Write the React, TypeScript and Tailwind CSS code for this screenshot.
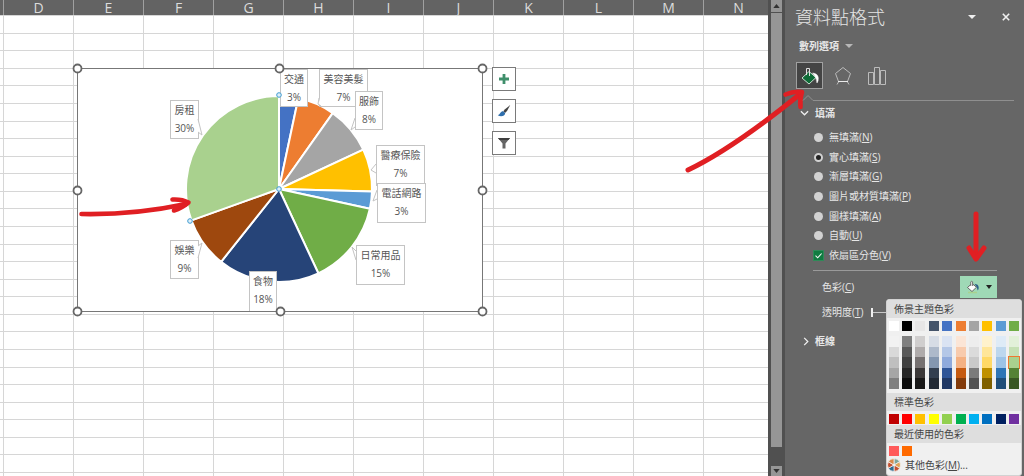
import { useState } from "react";
import type { ReactNode } from "react";

const COLUMNS = "DEFGHIJKLMN".split("");
const ROWS = Array.from({ length: 27 }, (_, i) => i + 1);

const CENTER = { x: 279, y: 189 };
const RADIUS = 93;

const SLICES = [
  { color: "#4472c4", from: 0, to: 12 },
  { color: "#ed7d31", from: 12, to: 35.3 },
  { color: "#a5a5a5", from: 35.3, to: 65 },
  { color: "#ffc000", from: 65, to: 91.6 },
  { color: "#5b9bd5", from: 91.6, to: 102.3 },
  { color: "#70ad47", from: 102.3, to: 155 },
  { color: "#264478", from: 155, to: 218.5 },
  { color: "#9e480e", from: 218.5, to: 250.3 },
  { color: "#a9d18e", from: 250.3, to: 360 },
];

const LABELS = [
  { name: "房租", value: "30%", x: 170, y: 100, w: 28, h: 38, tail: "M198 119 L202 135 L198 132" },
  { name: "交通", value: "3%", x: 280, y: 69, w: 27, h: 37, tail: "" },
  { name: "美容美髮", value: "7%", x: 319, y: 69, w: 48, h: 37, tail: "M319 98 L318 104 L321 106" },
  { name: "服飾", value: "8%", x: 355, y: 91, w: 27, h: 38, tail: "M355 118 L351 130 L355 127" },
  { name: "醫療保險", value: "7%", x: 376, y: 145, w: 48, h: 40, tail: "M376 164 L371 170 L376 173" },
  { name: "電話網路", value: "3%", x: 377, y: 183, w: 48, h: 39, tail: "M377 190 L373 201 L377 199" },
  { name: "日常用品", value: "15%", x: 356, y: 245, w: 48, h: 39, tail: "M356 260 L352 247 L356 251" },
  { name: "食物", value: "18%", x: 249, y: 271, w: 27, h: 40, tail: "" },
  { name: "娛樂", value: "9%", x: 170, y: 240, w: 28, h: 38, tail: "M198 246 L202 243 L198 258" },
];

const HANDLES = [
  [77, 68], [279, 68], [482, 68],
  [77, 190], [482, 190],
  [77, 311], [280, 311], [482, 311],
];

const POINT_HANDLES = [[279, 95], [279, 189], [190, 221]];

const FILL_OPTIONS = [
  { label: "無填滿", hotkey: "N" },
  { label: "實心填滿", hotkey: "S" },
  { label: "漸層填滿", hotkey: "G" },
  { label: "圖片或材質填滿", hotkey: "P" },
  { label: "圖樣填滿", hotkey: "A" },
  { label: "自動", hotkey: "U" },
];

const THEME = ["#ffffff", "#000000", "#e7e6e6", "#44546a", "#4472c4", "#ed7d31", "#a5a5a5", "#ffc000", "#5b9bd5", "#70ad47"];

const SHADES = [
  ["#f2f2f2", "#7f7f7f", "#d0cece", "#d6dce5", "#dae3f3", "#fbe5d6", "#ededed", "#fff2cc", "#deebf7", "#e2f0d9"],
  ["#d9d9d9", "#595959", "#afabab", "#adb9ca", "#b4c7e7", "#f8cbad", "#dbdbdb", "#ffe699", "#bdd7ee", "#c5e0b4"],
  ["#bfbfbf", "#404040", "#767171", "#8497b0", "#8faadc", "#f4b183", "#c9c9c9", "#ffd966", "#9dc3e6", "#a9d18e"],
  ["#a6a6a6", "#262626", "#3b3838", "#333f50", "#2f5597", "#c55a11", "#7b7b7b", "#bf9000", "#2e75b6", "#548235"],
  ["#7f7f7f", "#0d0d0d", "#181717", "#222a35", "#203864", "#843c0c", "#525252", "#7f6000", "#1f4e79", "#385723"],
];

const STANDARD = ["#c00000", "#ff0000", "#ffc000", "#ffff00", "#92d050", "#00b050", "#00b0f0", "#0070c0", "#002060", "#7030a0"];
const RECENT = ["#ff5a5a", "#ff6a00"];

function polar(angle: number) {
  const r = (angle * Math.PI) / 180;
  return `${CENTER.x + RADIUS * Math.sin(r)} ${CENTER.y - RADIUS * Math.cos(r)}`;
}

function slicePath(from: number, to: number) {
  const large = to - from > 180 ? 1 : 0;
  return `M${CENTER.x} ${CENTER.y} L${polar(from)} A${RADIUS} ${RADIUS} 0 ${large} 1 ${polar(to)} Z`;
}

function Hotkey({ children }: { children: ReactNode }) {
  return (
    <span>
      (<span className="underline underline-offset-1">{children}</span>)
    </span>
  );
}

function Chart() {
  return (
    <svg
      viewBox="70 60 420 260"
      className="absolute left-[70px] top-[60px] h-[260px] w-[420px]"
      role="img"
      aria-label="圓形圖"
    >
      <rect x="77.5" y="68.5" width="405" height="243" fill="#fff" stroke="#777" />
      {SLICES.map((s) => (
        <path key={s.from} d={slicePath(s.from, s.to)} fill={s.color} stroke="#fff" strokeWidth="2" strokeLinejoin="round" />
      ))}
      {LABELS.map((l) => (
        <g key={l.name}>
          <rect x={l.x + 0.5} y={l.y + 0.5} width={l.w} height={l.h} fill="#fff" stroke="#c4c4c4" />
          <path d={l.tail} fill="#fff" stroke="#c4c4c4" />
          <text
            x={l.x + l.w / 2 + 0.5}
            y={l.y + 14}
            textAnchor="middle"
            fill="#555"
            className="font-['Open_Sans','Noto_Sans_CJK_TC',sans-serif] text-[10px]"
          >
            {l.name}
          </text>
          <text
            x={l.x + l.w / 2 + 0.5}
            y={l.y + 32}
            textAnchor="middle"
            fill="#555"
            className="font-['Open_Sans','Noto_Sans_CJK_TC',sans-serif] text-[10px]"
          >
            {l.value}
          </text>
        </g>
      ))}
      <path d="M77 311.5H483" stroke="#777" />
      {HANDLES.map(([x, y]) => (
        <circle key={`${x}-${y}`} cx={x + 0.5} cy={y + 0.5} r="4" fill="#fff" stroke="#666" strokeWidth="1.8" />
      ))}
      {POINT_HANDLES.map(([x, y]) => (
        <circle key={`${x}-${y}`} cx={x} cy={y} r="2.3" fill="#dff0fa" stroke="#3f9bd0" strokeWidth="1" />
      ))}
    </svg>
  );
}

function ChartButton({ label, children }: { label: string; children: ReactNode }) {
  return (
    <button aria-label={label} className="flex size-6 items-center justify-center border border-[#7a7a7a] bg-white">
      <svg viewBox="0 0 14 14" className="size-3.5" aria-hidden="true">
        {children}
      </svg>
    </button>
  );
}

function Sheet() {
  return (
    <main className="relative min-w-0 flex-1 overflow-hidden bg-white">
      <table className="w-full min-w-[773px] table-fixed border-separate border-spacing-0">
        <colgroup>
          <col className="w-[3px]" />
          {COLUMNS.map((c) => (
            <col key={c} className="w-[70px]" />
          ))}
          <col />
        </colgroup>
        <thead>
          <tr className="h-[15px] bg-[#636363]">
            <td className="p-0" />
            {COLUMNS.map((c) => (
              <th
                key={c}
                scope="col"
                className="border-l border-[#a0a0a0] p-0 text-sm font-normal leading-[15px] text-[#dcdcdc]"
              >
                {c}
              </th>
            ))}
            <td className="p-0" />
          </tr>
        </thead>
        <tbody>
          {ROWS.map((r) => (
            <tr key={r} className="h-[18px] nth-[7n+2]:h-[17px] nth-[7n+4]:h-[17px] nth-[7n+7]:h-[17px]">
              <td className="border-t border-[#d6d6d6] p-0" />
              {COLUMNS.map((c) => (
                <td key={c} className="border-l border-t border-[#d6d6d6] p-0" />
              ))}
              <td className="border-t border-[#d6d6d6] p-0" />
            </tr>
          ))}
        </tbody>
      </table>
      <Chart />
      <div className="absolute left-[492px] top-[67px] flex flex-col gap-2">
        <ChartButton label="圖表項目">
          <path d="M7 2v10M2 7h10" stroke="#3f8f6b" strokeWidth="2.8" />
        </ChartButton>
        <ChartButton label="圖表樣式">
          <path d="M13.2 1 8 5.200 6.300 7.300 8 9l2-2Z" fill="#444" />
          <path d="M6.200 7.200C3.500 7 3.500 10 .8 11.300 4 13 8 12 8.200 9.200Z" fill="#2f6fad" />
        </ChartButton>
        <ChartButton label="圖表篩選">
          <path d="M1 2h12L8.500 7.500V12.500h-3V7.500Z" fill="#666" />
          <path d="M1 2h12L11.500 4h-9Z" fill="#3f3f3f" />
        </ChartButton>
      </div>
      <svg viewBox="70 190 130 40" className="pointer-events-none absolute left-[70px] top-[190px] h-[40px] w-[130px]" aria-hidden="true">
        <g fill="none" stroke="#e01f23" strokeWidth="4.6" strokeLinecap="round" strokeLinejoin="round">
          <path d="M81.500 214Q135 215 186 204" />
          <path d="M172.500 199.500Q182 199 188.500 202.500 182 208 174 210.500" />
          <path d="M175 207.500 186 204" />
        </g>
      </svg>
    </main>
  );
}

function ScrollBar() {
  return (
    <div className="flex w-[17px] shrink-0 flex-col border-x-[3px] border-[#505050] bg-[#505050]">
      <button aria-label="向上捲動" className="flex h-3 items-center justify-center bg-[#969696]">
        <svg viewBox="0 0 8 5" className="h-[4px] w-[7px]" aria-hidden="true">
          <path d="M0 5 4 0l4 5Z" fill="#333" />
        </svg>
      </button>
      <div className="mb-[19px] mt-px flex-1 bg-[#969696]" />
      <button aria-label="向下捲動" className="flex h-[10px] items-center justify-center bg-[#969696]">
        <svg viewBox="0 0 8 5" className="h-[4px] w-[7px]" aria-hidden="true">
          <path d="M0 0h8L4 5Z" fill="#333" />
        </svg>
      </button>
    </div>
  );
}

function Swatch({ color, selected = false }: { color: string; selected?: boolean }) {
  return (
    <button
      aria-label={color}
      style={{ backgroundColor: color }}
      className={selected ? "h-full w-[10px] outline outline-1 outline-[#f07830]" : "h-full w-[10px]"}
    />
  );
}

function SwatchRow({ colors }: { colors: string[] }) {
  return (
    <div className="grid h-[10px] grid-cols-10 justify-items-center">
      {colors.map((c) => (
        <Swatch key={c} color={c} />
      ))}
    </div>
  );
}

function ColorMenu() {
  const heading = "bg-[#dedede] pl-[7px] text-[10px] leading-[18px] text-[#444]";
  return (
    <div className="absolute -right-[25px] top-full z-10 mt-px w-[136px] overflow-hidden rounded-[3px] border border-[#d2d2d2] bg-[#f0f0f0] pb-px">
      <h3 className={heading}>佈景主題色彩</h3>
      <div className="pt-[3px]">
        <SwatchRow colors={THEME} />
      </div>
      <div className="mb-1 mt-[5px] grid h-[53px] grid-cols-10 justify-items-center">
        {SHADES.map((row, i) =>
          row.map((c, j) => <Swatch key={`${i}-${j}`} color={c} selected={i === 2 && j === 9} />),
        )}
      </div>
      <h3 className={heading}>標準色彩</h3>
      <div className="pb-px pt-[3px]">
        <SwatchRow colors={STANDARD} />
      </div>
      <h3 className={heading}>最近使用的色彩</h3>
      <div className="pt-[3px]">
        <SwatchRow colors={RECENT} />
      </div>
      <button className="flex h-[18px] w-full items-center gap-1 text-[10px] leading-[18px] text-[#444]">
        <svg viewBox="-7 -7 14 14" className="size-[14px]" aria-hidden="true">
          <g stroke="#f0f0f0" strokeWidth=".8">
            <path d="M0 0V-6.500A6.500 6.500 0 0 1 5.600-3.200Z" fill="#7fa69a" />
            <path d="M0 0 5.600-3.200A6.500 6.500 0 0 1 5.600 3.200Z" fill="#e0a458" />
            <path d="M0 0 5.600 3.200A6.500 6.500 0 0 1 0 6.500Z" fill="#c4502f" />
            <path d="M0 0V6.500A6.500 6.500 0 0 1-5.600 3.200Z" fill="#2f6b8f" />
            <path d="M0 0-5.600 3.200A6.500 6.500 0 0 1-5.600-3.200Z" fill="#c4502f" />
            <path d="M0 0-5.600-3.200A6.500 6.500 0 0 1 0-6.500Z" fill="#d98a4a" />
          </g>
          <circle r="1.3" fill="#f0f0f0" />
        </svg>
        <span>
          其他色彩<Hotkey>M</Hotkey>...
        </span>
      </button>
    </div>
  );
}

function FormatPane() {
  const [fill, setFill] = useState("S");
  return (
    <aside className="relative w-[239px] shrink-0 bg-[#666666] text-[10px] text-[#e6e6e6]">
      <header className="flex h-[34px] items-center pl-[10px] pr-[14px]">
        <h1 className="flex-1 text-lg font-light leading-[34px] text-[#e4e4e4]">資料點格式</h1>
        <button aria-label="工作窗格選項" className="mr-[26px]">
          <svg viewBox="0 0 8 4" className="h-[4px] w-[8px]" aria-hidden="true">
            <path d="M0 0h8L4 4Z" fill="#f0f0f0" />
          </svg>
        </button>
        <button aria-label="關閉">
          <svg viewBox="0 0 8 8" className="size-2" aria-hidden="true">
            <path d="M.8.8l6.400 6.400M7.200.8.8 7.200" stroke="#f0f0f0" strokeWidth="1.6" />
          </svg>
        </button>
      </header>

      <button className="mt-1 flex h-4 items-center gap-[6px] pl-[14px] font-bold">
        數列選項
        <svg viewBox="0 0 8 4" className="h-[4px] w-[8px]" aria-hidden="true">
          <path d="M0 0h8L4 4Z" fill="#b8b8b8" />
        </svg>
      </button>

      <div className="mt-2 flex h-[27px] items-center gap-[11px] pl-[11px]">
        <button aria-label="填滿與線條" className="flex size-[27px] items-center justify-center border border-[#a0a0a0] bg-[#444444]">
          <svg viewBox="0 0 20 20" className="size-5" aria-hidden="true">
            <path d="M2 12 9 5.500l7 6L9 18Z" fill="#0f6b37" stroke="#c8dccf" strokeWidth="1" />
            <path d="M6.500 9V2.500h3V10" fill="none" stroke="#e0e0e0" />
            <path d="M12.500 7q5.500.5 5.800 5 .2 3-1.300 5Q16.800 11.500 12.500 7Z" fill="#ffffff" stroke="#ffffff" strokeWidth=".5" />
          </svg>
        </button>
        <button aria-label="效果" className="flex w-[18px] justify-center">
          <svg viewBox="0 0 18 20" className="h-5 w-[18px]" aria-hidden="true">
            <path d="M9 1.500 16.500 7.500 13.500 15.500H4.500L1.500 7.500Z" fill="none" stroke="#bcbcbc" />
            <path d="M4.500 16 3 18.500M13.500 16l1.500 2.500" stroke="#bcbcbc" />
            <path d="M4 15.500h10" stroke="#eaeaea" />
          </svg>
        </button>
        <button aria-label="數列選項" className="ml-[5px]">
          <svg viewBox="0 0 18 20" className="h-5 w-[18px]" aria-hidden="true">
            <path d="M.5 6.500h5v12h-5ZM6.500 1.500h5v17h-5ZM12.500 4.500h5v14h-5Z" fill="none" stroke="#bcbcbc" />
          </svg>
        </button>
      </div>

      <div className="ml-[15px] mr-[10px] mt-[6px] flex items-end">
        <svg viewBox="0 0 20 6" className="h-[6px] w-5" aria-hidden="true">
          <path d="M0 5.500h3L8 .5 13 5.500h7" fill="none" stroke="#8f8f8f" />
        </svg>
        <div className="h-px flex-1 bg-[#8f8f8f]" />
      </div>

      <section className="pt-[2px]">
        <button className="flex h-5 items-center gap-[6px] pl-[15px] font-bold">
          <svg viewBox="0 0 10 6" className="h-[6px] w-[9px]" aria-hidden="true">
            <path d="m1 1 4 4 4-4" fill="none" stroke="#f0f0f0" strokeWidth="1.4" />
          </svg>
          填滿
        </button>

        <div className="mt-[5px] grid h-[137px] grid-rows-7 pl-[29px]">
          {FILL_OPTIONS.map((o) => (
            <label key={o.hotkey} className="flex items-center gap-[6px]">
              <input
                type="radio"
                name="fill"
                checked={fill === o.hotkey}
                onChange={() => setFill(o.hotkey)}
                className="size-[9px] appearance-none rounded-full bg-[#d2d2d2] checked:border-2 checked:border-[#d2d2d2] checked:bg-[#222222]"
              />
              <span>
                {o.label}
                <Hotkey>{o.hotkey}</Hotkey>
              </span>
            </label>
          ))}
          <label className="flex items-center gap-[6px]">
            <span className="relative flex size-[9px]">
              <input type="checkbox" defaultChecked className="size-[9px] appearance-none bg-[#107c41] outline outline-1 outline-[#2f8a58]" />
              <svg viewBox="0 0 9 9" className="pointer-events-none absolute inset-0" aria-hidden="true">
                <path d="m1.500 4.600 2.200 2.200L7.600 2.500" fill="none" stroke="#f4f4f4" strokeWidth="1.1" />
              </svg>
            </span>
            <span>
              依扇區分色<Hotkey>V</Hotkey>
            </span>
          </label>
        </div>

        <div className="ml-7 mr-[27px] mt-[5px] h-px bg-[#9a9a9a]" />

        <div className="mr-[27px] mt-[5px] flex h-[22px] items-center justify-between pl-[37px]">
          <span>
            色彩<Hotkey>C</Hotkey>
          </span>
          <div className="relative">
            <button aria-label="色彩" className="flex h-[22px] w-[37px] items-center justify-center gap-[6px] bg-[#9fd9b6]">
              <svg viewBox="0 0 14 14" className="size-[14px]" aria-hidden="true">
                <path d="M2 12.500h9" stroke="#a9d18e" strokeWidth="1.5" />
                <path d="M1.500 7.500 6 3.500l4.500 3.700L6 11.500Z" fill="#fff" stroke="#555" strokeWidth=".9" />
                <path d="M4.800 6V1.800q.9-1 1.800 0V6" fill="#fff" stroke="#555" strokeWidth=".8" />
                <path d="M8.500 3.800q4 .4 4.200 3.600.1 2-1 3.200Q11.200 6.800 8.500 3.800Z" fill="#2c5f8a" />
              </svg>
              <svg viewBox="0 0 6 4" className="h-[4px] w-[6px]" aria-hidden="true">
                <path d="M0 0h6L3 4Z" fill="#222" />
              </svg>
            </button>
            <ColorMenu />
          </div>
        </div>

        <label className="mr-[27px] mt-1 flex h-5 items-center gap-2 pl-[37px]">
          <span>
            透明度<Hotkey>T</Hotkey>
          </span>
          <input
            type="range"
            defaultValue={0}
            className="h-px min-w-0 flex-1 appearance-none bg-[#c8c8c8] [&::-webkit-slider-thumb]:h-[9px] [&::-webkit-slider-thumb]:w-[2px] [&::-webkit-slider-thumb]:appearance-none [&::-webkit-slider-thumb]:bg-[#f0f0f0]"
          />
        </label>
      </section>

      <button className="mt-[9px] flex h-5 items-center gap-[6px] pl-[18px] font-bold">
        <svg viewBox="0 0 6 10" className="h-[9px] w-[6px]" aria-hidden="true">
          <path d="m1 1 4 4-4 4" fill="none" stroke="#f0f0f0" strokeWidth="1.4" />
        </svg>
        框線
      </button>

      <svg
        viewBox="680 0 344 270"
        className="pointer-events-none absolute right-0 top-0 z-20 h-[270px] w-[344px]"
        aria-hidden="true"
      >
        <g fill="none" stroke="#e01f23" strokeWidth="5" strokeLinecap="round" strokeLinejoin="round">
          <path d="M688 170Q732 149 799 95" />
          <path d="M785.500 94.500Q793 91 802 92 799.500 99 800.500 107" strokeWidth="4.6" />
          <path d="M976 214V258" />
          <path d="M969 248 976 259 984 248" />
        </g>
      </svg>
    </aside>
  );
}

export default function App() {
  return (
    <div className="flex h-screen overflow-hidden font-['Open_Sans','Noto_Sans_CJK_TC',sans-serif]">
      <Sheet />
      <ScrollBar />
      <FormatPane />
    </div>
  );
}
